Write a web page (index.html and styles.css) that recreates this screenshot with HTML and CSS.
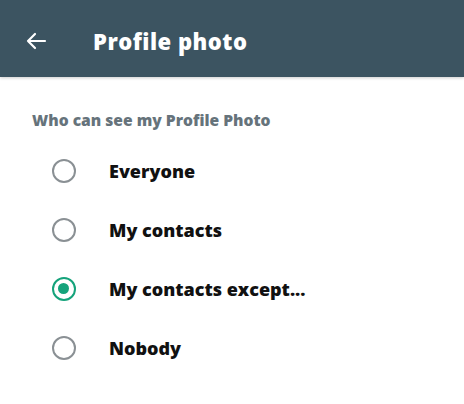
FILE: index.html
```html
<!DOCTYPE html>
<html lang="en">
<head>
	<meta charset="UTF-8">
	<title>Profile photo</title>
	<link rel="stylesheet" href="styles.css">
</head>
<body>
	<!--顶部栏-->
	<div class="header">
		<svg class="back" width="24" height="24" viewBox="0 0 24 24">
			<path d="M21 12H4M11 5l-7 7 7 7" fill="none" stroke="#fff" stroke-width="2.2" stroke-linecap="round" stroke-linejoin="round"/>
		</svg>
		<div class="title">Profile photo</div>
	</div>
	<!--选项-->
	<div class="content">
		<div class="caption">Who can see my Profile Photo</div>
		<ul class="options">
			<li><span class="radio"></span>Everyone</li>
			<li><span class="radio"></span>My contacts</li>
			<li class="checked"><span class="radio"></span>My contacts except...</li>
			<li><span class="radio"></span>Nobody</li>
		</ul>
	</div>
</body>
</html>
```
FILE: styles.css
```css
*{
	margin:0px;
	padding:0px;
}
body{
	width:464px;
	height:404px;
	background:#fff;
	font-family:"Open Sans","Noto Sans",sans-serif;
	font-weight:800;
}
ul li{
	list-style:none;
}
.header{
	height:77px;
	background:#3c5461;
	display:flex;
	align-items:center;
	padding-left:24px;
	padding-top:4px;
	box-sizing:border-box;
	box-shadow:0 1px 3px rgba(0,0,0,0.2);
}
.back{
	width:24px;
	height:24px;
}
.title{
	color:#fff;
	font-size:22px;
	letter-spacing:0.5px;
	margin-left:45px;
}
.content{
	padding-top:33px;
}
.caption{
	color:#66737b;
	font-size:15.6px;
	padding-left:32px;
	line-height:20px;
}
.options{
	margin-top:11px;
}
.options li{
	height:59px;
	display:flex;
	align-items:center;
	padding-left:52px;
	font-size:18px;
	color:#111;
}
.radio{
	width:24px;
	height:24px;
	box-sizing:border-box;
	border:2.5px solid #8a9094;
	border-radius:50%;
	margin-right:33px;
	position:relative;
}
.checked .radio{
	border-color:#15a37b;
}
.checked .radio::after{
	content:"";
	position:absolute;
	left:4px;
	top:4px;
	width:11px;
	height:11px;
	border-radius:50%;
	background:#15a37b;
}
```
